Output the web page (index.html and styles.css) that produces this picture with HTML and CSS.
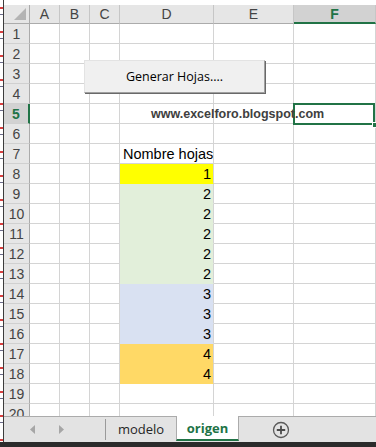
FILE: index.html
```html
<!DOCTYPE html>
<html lang="es">
<head>
<meta charset="utf-8">
<title>origen</title>
<link rel="stylesheet" href="styles.css">
</head>
<body>
<div class="app">
  <div class="main">
    <div class="strip"></div>
    <div class="workspace">
      <div class="sheet">
        <div class="grid">
          <div class="corner"><span class="tri"></span></div>
          <div class="ch">A</div><div class="ch">B</div><div class="ch">C</div><div class="ch">D</div><div class="ch">E</div><div class="ch ch-sel">F</div>

          <div class="rh">1</div><div class="c"></div><div class="c"></div><div class="c"></div><div class="c"></div><div class="c"></div><div class="c"></div>
          <div class="rh">2</div><div class="c"></div><div class="c"></div><div class="c"></div><div class="c"></div><div class="c"></div><div class="c"></div>
          <div class="rh">3</div><div class="c"></div><div class="c"></div><div class="c"></div><div class="c"></div><div class="c"></div><div class="c"></div>
          <div class="rh">4</div><div class="c"></div><div class="c"></div><div class="c"></div><div class="c"></div><div class="c"></div><div class="c"></div>
          <div class="rh rh-sel">5</div><div class="c"></div><div class="c"></div><div class="c"></div><div class="c"></div><div class="c"></div><div class="c"></div>
          <div class="rh">6</div><div class="c"></div><div class="c"></div><div class="c"></div><div class="c"></div><div class="c"></div><div class="c"></div>
          <div class="rh">7</div><div class="c"></div><div class="c"></div><div class="c"></div><div class="c txt">Nombre hojas</div><div class="c"></div><div class="c"></div>
          <div class="rh">8</div><div class="c"></div><div class="c"></div><div class="c"></div><div class="c num y">1</div><div class="c"></div><div class="c"></div>
          <div class="rh">9</div><div class="c"></div><div class="c"></div><div class="c"></div><div class="c num g">2</div><div class="c"></div><div class="c"></div>
          <div class="rh">10</div><div class="c"></div><div class="c"></div><div class="c"></div><div class="c num g">2</div><div class="c"></div><div class="c"></div>
          <div class="rh">11</div><div class="c"></div><div class="c"></div><div class="c"></div><div class="c num g">2</div><div class="c"></div><div class="c"></div>
          <div class="rh">12</div><div class="c"></div><div class="c"></div><div class="c"></div><div class="c num g">2</div><div class="c"></div><div class="c"></div>
          <div class="rh">13</div><div class="c"></div><div class="c"></div><div class="c"></div><div class="c num g">2</div><div class="c"></div><div class="c"></div>
          <div class="rh">14</div><div class="c"></div><div class="c"></div><div class="c"></div><div class="c num b">3</div><div class="c"></div><div class="c"></div>
          <div class="rh">15</div><div class="c"></div><div class="c"></div><div class="c"></div><div class="c num b">3</div><div class="c"></div><div class="c"></div>
          <div class="rh">16</div><div class="c"></div><div class="c"></div><div class="c"></div><div class="c num b">3</div><div class="c"></div><div class="c"></div>
          <div class="rh">17</div><div class="c"></div><div class="c"></div><div class="c"></div><div class="c num o">4</div><div class="c"></div><div class="c"></div>
          <div class="rh">18</div><div class="c"></div><div class="c"></div><div class="c"></div><div class="c num o">4</div><div class="c"></div><div class="c"></div>
          <div class="rh">19</div><div class="c"></div><div class="c"></div><div class="c"></div><div class="c"></div><div class="c"></div><div class="c"></div>
          <div class="rh">20</div><div class="c"></div><div class="c"></div><div class="c"></div><div class="c"></div><div class="c"></div><div class="c"></div>
        </div>
        <div class="macro-btn">Generar Hojas....</div>
        <div class="selection"><span class="handle"></span></div>
        <div class="link-text">www.excelforo.blogspot.com</div>
      </div>
      <div class="tabbar">
        <div class="nav">
          <svg class="arrow" width="6" height="9" viewBox="0 0 6 9"><path d="M5 0 L0 4.5 L5 9 Z" fill="#a6a6a6"/></svg>
          <svg class="arrow" width="6" height="9" viewBox="0 0 6 9"><path d="M0 0 L5 4.5 L0 9 Z" fill="#a6a6a6"/></svg>
        </div>
        <div class="tab">modelo</div>
        <div class="tab tab-active">origen</div>
        <div class="add">
          <svg width="18" height="18" viewBox="0 0 18 18"><circle cx="9" cy="9" r="7.5" fill="none" stroke="#5a5a5a" stroke-width="1.3"/><path d="M9 4.8 V13.2 M4.8 9 H13.2" stroke="#4a4a4a" stroke-width="1.8"/></svg>
        </div>
      </div>
    </div>
  </div>
  <div class="status"></div>
</div>
</body>
</html>
```

FILE: styles.css
```css
* { box-sizing: border-box; }
html, body { margin: 0; padding: 0; }
body {
  width: 376px;
  height: 447px;
  overflow: hidden;
  background: #ffffff;
  font-family: "Liberation Sans", Arial, sans-serif;
}
.app {
  width: 376px;
  height: 447px;
  display: flex;
  flex-direction: column;
}
.main {
  flex: 1;
  display: flex;
  min-height: 0;
}
.strip {
  width: 4px;
  background:
    repeating-linear-gradient(to bottom, transparent 0 7px, #d94040 7px 9px, transparent 9px 14px, #6b6b8a 14px 15px, transparent 15px 24px),
    #ffffff;
  border-right: 1px solid #3c3c3c;
}
.workspace {
  flex: 1;
  display: flex;
  flex-direction: column;
  padding-top: 5px;
  min-width: 0;
}
.sheet {
  position: relative;
  height: 411px;
  overflow: hidden;
}
.grid {
  display: grid;
  grid-template-columns: 26px 30px 30px 30px 94px 80px 82px;
  grid-template-rows: 19px;
  grid-auto-rows: 20px;
}
.corner {
  position: relative;
  background: #e6e6e6;
  border-right: 1px solid #ababab;
  border-bottom: 1px solid #ababab;
}
.tri {
  position: absolute;
  right: 3px;
  bottom: 3px;
  width: 0;
  height: 0;
  border-left: 12px solid transparent;
  border-bottom: 12px solid #b4b4b4;
}
.ch {
  background: #e6e6e6;
  border-right: 1px solid #c6c6c6;
  border-bottom: 1px solid #ababab;
  font-family: "Liberation Sans", Arial, sans-serif;
  font-size: 14px;
  color: #444444;
  text-align: center;
  line-height: 19px;
}
.ch-sel {
  background: #d2d2d2;
  color: #217346;
  font-weight: bold;
  border-bottom: 2px solid #217346;
}
.rh {
  background: #e6e6e6;
  border-right: 1px solid #ababab;
  border-bottom: 1px solid #d0d0d0;
  font-family: "Liberation Sans", Arial, sans-serif;
  font-size: 14px;
  color: #444444;
  text-align: center;
  line-height: 20px;
}
.rh-sel {
  background: #d2d2d2;
  color: #217346;
  font-weight: bold;
  border-right: 2px solid #217346;
}
.c {
  border-right: 1px solid #d4d4d4;
  border-bottom: 1px solid #d4d4d4;
  font-family: "Liberation Sans", Arial, sans-serif;
  font-size: 14.5px;
  line-height: 20px;
  color: #000000;
  white-space: nowrap;
}
.txt { padding-left: 3px; }
.num { text-align: right; padding-right: 2px; }
.y { background: #ffff00; border-bottom-color: #ffff00; }
.g { background: #e2efda; border-bottom-color: #e2efda; }
.b { background: #d9e1f2; border-bottom-color: #d9e1f2; }
.o { background: #ffd966; border-bottom-color: #ffd966; }

.macro-btn {
  position: absolute;
  left: 80px;
  top: 55px;
  width: 181px;
  height: 33px;
  background: #f0f0f0;
  border-top: 1px solid #e3e3e3;
  border-left: 1px solid #e3e3e3;
  border-right: 1px solid #a0a0a0;
  border-bottom: 1px solid #a0a0a0;
  box-shadow: 1px 1px 0 #696969;
  font-family: "Open Sans", "Noto Sans", sans-serif;
  font-size: 12.5px;
  color: #000000;
  text-align: center;
  line-height: 31px;
}
.link-text {
  position: absolute;
  left: 147px;
  top: 99px;
  height: 20px;
  line-height: 20px;
  font-family: "Liberation Sans", Arial, sans-serif;
  font-weight: bold;
  font-size: 12.5px;
  color: #404040;
  white-space: nowrap;
}
.selection {
  position: absolute;
  left: 289px;
  top: 98px;
  width: 82px;
  height: 22px;
  border: 2px solid #217346;
}
.handle {
  position: absolute;
  right: -5px;
  bottom: -5px;
  width: 6px;
  height: 6px;
  background: #217346;
  border: 1px solid #ffffff;
}
.tabbar {
  height: 26px;
  display: flex;
  align-items: stretch;
  background: #e3e3e3;
  border-top: 1px solid #ababab;
  font-family: "Open Sans", "Noto Sans", sans-serif;
  font-size: 13px;
}
.nav {
  width: 102px;
  display: flex;
  align-items: center;
  padding-left: 26px;
  gap: 23px;
  border-right: 1px solid #9a9a9a;
  margin: 2px 0 2px 0;
}
.arrow { display: block; }
.tab {
  width: 70px;
  text-align: center;
  line-height: 24px;
  color: #262626;
}
.tab-active {
  width: 63px;
  background: #ffffff;
  margin-top: -1px;
  color: #217346;
  font-weight: bold;
  border-left: 1px solid #ababab;
  border-right: 1px solid #ababab;
  border-bottom: 2px solid #217346;
  line-height: 24px;
  margin-bottom: 1px;
}
.add {
  width: 84px;
  display: flex;
  align-items: center;
  justify-content: center;
}
.status {
  height: 5px;
  background: #2b2b2b;
}
```
